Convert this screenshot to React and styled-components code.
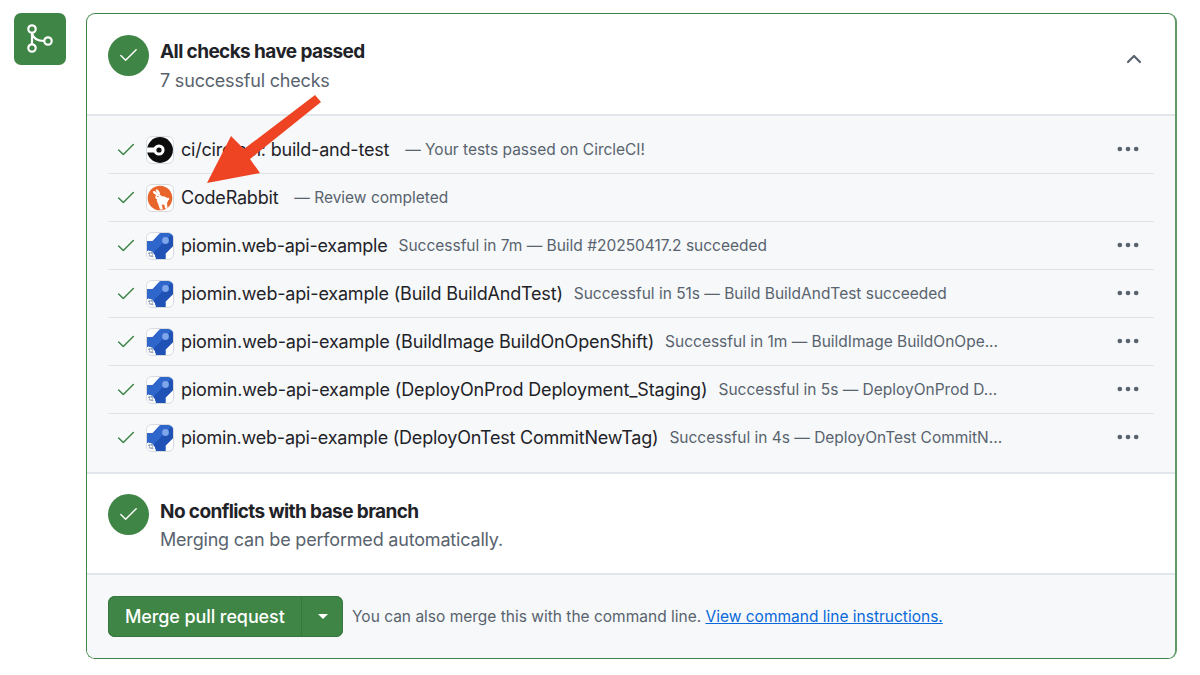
import React from 'react';
import styled, { createGlobalStyle } from 'styled-components';
import { Check, ChevronUp, Ellipsis } from 'lucide-react';

const GlobalStyle = createGlobalStyle`
  html, body { margin: 0; padding: 0; background: #fff; }
  body { font-family: Inter, "Liberation Sans", sans-serif; color: #1f2328; }
`;

const Page = styled.div`
  position: relative;
  width: 1200px;
  height: 675px;
  overflow: hidden;
  box-sizing: border-box;
  padding: 13px 23px 0 14px;
  display: flex;
  gap: 20px;
  align-items: flex-start;
`;

const MergeBadge = styled.div`
  width: 52px;
  height: 52px;
  border-radius: 7px;
  background: #3e8546;
  display: flex;
  flex-shrink: 0;
`;

const Card = styled.div`
  flex: 1;
  height: 646px;
  box-sizing: border-box;
  border: 1px solid #3f8547;
  border-right: 2px solid #5f9a66;
  border-radius: 9px;
  overflow: hidden;
  display: flex;
  flex-direction: column;
`;

const Section = styled.div`
  height: ${p => p.$height}px;
  flex-shrink: 0;
  box-sizing: border-box;
  display: flex;
  align-items: flex-start;
  gap: 11px;
  padding: ${p => p.$top}px 21px 0;
`;

const StatusCircle = styled.div`
  width: 41px;
  height: 41px;
  border-radius: 50%;
  background: #3e8546;
  color: #fff;
  display: flex;
  align-items: center;
  justify-content: center;
  flex-shrink: 0;
`;

const SectionText = styled.div`
  flex: 1;
  display: flex;
  flex-direction: column;
  gap: ${p => p.$gap}px;
  margin-top: ${p => p.$offset}px;
`;

const SectionTitle = styled.div`
  font-size: 19px;
  line-height: 23px;
  font-weight: 700;
  letter-spacing: -0.6px;
  color: #1f2328;
`;

const SectionSub = styled.div`
  font-size: 18px;
  line-height: 23px;
  letter-spacing: -0.19px;
  color: #59636e;
`;

const Collapse = styled.div`
  color: #59636e;
  display: flex;
  margin: 12px 8px 0 0;
`;

const Checks = styled.div`
  height: 360px;
  flex-shrink: 0;
  box-sizing: border-box;
  background: #f6f8fa;
  border-top: 2px solid #e2e5e9;
  border-bottom: 2px solid #e2e5e9;
  padding: 10px 21px 0;
`;

const Row = styled.div`
  height: 48px;
  box-sizing: border-box;
  display: flex;
  align-items: center;
  border-bottom: 1px solid ${p => (p.$last ? 'transparent' : '#e0e3e7')};
`;

const RowCheck = styled.div`
  width: 38px;
  color: #3e8546;
  display: flex;
  padding-left: 7px;
  box-sizing: border-box;
  flex-shrink: 0;
`;

const AppIcon = styled.div`
  width: 28px;
  height: 28px;
  box-sizing: border-box;
  border: 1px solid #d8dce0;
  border-radius: 6px;
  background: #fff;
  overflow: hidden;
  flex-shrink: 0;
  display: flex;
  align-items: center;
  justify-content: center;
  margin-right: 7px;
`;

const RowName = styled.span`
  font-size: 18px;
  letter-spacing: ${p => p.$track}px;
  color: #1f2328;
  white-space: nowrap;
`;

const RowDetail = styled.span`
  flex: 1;
  margin-left: ${p => p.$gap}px;
  font-size: 15.5px;
  letter-spacing: -0.01px;
  color: #59636e;
  white-space: nowrap;
`;

const RowMenu = styled.div`
  width: 28px;
  height: 20px;
  margin: 0 12px 2px 0;
  color: #59636e;
  display: flex;
  align-items: center;
  justify-content: center;
`;

const Footer = styled.div`
  flex: 1;
  background: #f6f8fa;
  border-top: 2px solid #e2e5e9;
  display: flex;
  align-items: center;
  gap: 9px;
  padding: 0 21px 0;
`;

const MergeButton = styled.div`
  display: flex;
  height: 41px;
  background: #3e8546;
  color: #fff;
  border-radius: 7px;
  box-shadow: inset 0 0 0 1px #37763e;
  font-size: 18px;
  font-weight: 500;
  letter-spacing: -0.1px;
  align-items: stretch;
`;

const MergeLabel = styled.div`
  width: 194px;
  box-sizing: border-box;
  padding-left: 17px;
  display: flex;
  align-items: center;
  border-right: 1px solid #37763e;
`;

const MergeCaret = styled.div`
  width: 41px;
  display: flex;
  align-items: center;
  justify-content: center;
  &::after {
    content: '';
    border-left: 5px solid transparent;
    border-right: 5px solid transparent;
    border-top: 5px solid #fff;
  }
`;

const Hint = styled.div`
  font-size: 15.5px;
  letter-spacing: 0;
  color: #59636e;
  white-space: nowrap;
`;

const HintLink = styled.a`
  color: #0969da;
  text-decoration: underline;
`;

const Arrow = styled.svg`
  position: absolute;
  left: 0;
  top: 0;
  pointer-events: none;
`;

const BranchIcon = () => (
  <svg width="52" height="52" viewBox="0 0 52 52" fill="none" stroke="#fff" strokeWidth="2.2">
    <circle cx="18" cy="16" r="3.7" />
    <circle cx="18" cy="35" r="3.7" />
    <circle cx="34" cy="28" r="3.7" />
    <path d="M18 19.700v11.600M18 20c1 5 5 8 12.300 8" />
  </svg>
);

const CircleCiIcon = () => (
  <svg width="26" height="26" viewBox="0 0 26 26">
    <circle cx="13" cy="13" r="12.900" fill="#0d0d0d" />
    <rect x="0" y="10.500" width="12" height="5" fill="#fff" />
    <circle cx="12" cy="13" r="5.600" fill="#fff" />
    <circle cx="12" cy="13" r="2.600" fill="#0d0d0d" />
  </svg>
);

const RabbitIcon = () => (
  <svg width="26" height="26" viewBox="0 0 26 26">
    <circle cx="13" cy="13" r="12.300" fill="#e8652c" />
    <g fill="#fff">
      <ellipse cx="9" cy="8.500" rx="1.300" ry="3.600" transform="rotate(-55 9 8.500)" />
      <ellipse cx="11" cy="7" rx="1.200" ry="3.200" transform="rotate(-35 11 7)" />
      <ellipse cx="11.500" cy="12" rx="3.200" ry="2.500" />
      <ellipse cx="15.500" cy="15.500" rx="5.600" ry="4.200" />
      <path d="M10.500 17h3.500l2 7.500h-3zM17 18h3l.5 5.500h-2.500z" />
      <circle cx="21" cy="14" r="1.200" />
    </g>
    <circle cx="11" cy="11.500" r=".7" fill="#e8652c" />
  </svg>
);

const PipelinesIcon = () => (
  <svg width="26" height="26" viewBox="0 0 26 26">
    <path d="M0 8h5.500L13 0h13v13l-7.500 7.500V26H9l-1-4-4-4H0z" fill="#2f66cc" />
    <path d="M7 19 19 7l7-7v13l-7.500 7.500V26H9z" fill="#1f52b4" />
    <circle cx="18.500" cy="7.500" r="3.400" fill="#7fa6e8" />
    <path d="M1 17l8 8H1z" fill="#fff" />
    <path d="M1.500 19.500l4.500 4.500M5.500 18.500l-3 5" stroke="#9fb0c4" strokeWidth="2" />
    <circle cx="4" cy="21.500" r="1.600" fill="#fff" stroke="#8fa0b5" strokeWidth=".8" />
  </svg>
);

const checks = [
  { name: 'ci/circleci: build-and-test', detail: '— Your tests passed on CircleCI!', gap: 16, track: -0.2, icon: <CircleCiIcon /> },
  { name: 'CodeRabbit', detail: '— Review completed', gap: 16, track: -0.2, icon: <RabbitIcon />, noMenu: true },
  { name: 'piomin.web-api-example', detail: 'Successful in 7m — Build #20250417.2 succeeded', gap: 11, track: -0.24, icon: <PipelinesIcon /> },
  { name: 'piomin.web-api-example (Build BuildAndTest)', detail: 'Successful in 51s — Build BuildAndTest succeeded', gap: 11, track: -0.18, icon: <PipelinesIcon /> },
  { name: 'piomin.web-api-example (BuildImage BuildOnOpenShift)', detail: 'Successful in 1m — BuildImage BuildOnOpe...', gap: 11, track: -0.14, icon: <PipelinesIcon /> },
  { name: 'piomin.web-api-example (DeployOnProd Deployment_Staging)', detail: 'Successful in 5s — DeployOnProd D...', gap: 11, track: -0.13, icon: <PipelinesIcon /> },
  { name: 'piomin.web-api-example (DeployOnTest CommitNewTag)', detail: 'Successful in 4s — DeployOnTest CommitN...', gap: 11, track: -0.22, icon: <PipelinesIcon /> },
];

export default function App() {
  return (
    <Page>
      <GlobalStyle />
      <MergeBadge>
        <BranchIcon />
      </MergeBadge>
      <Card>
        <Section $height={100} $top={21}>
          <StatusCircle>
            <Check size={23} strokeWidth={1.5} />
          </StatusCircle>
          <SectionText $gap={6} $offset={5}>
            <SectionTitle>All checks have passed</SectionTitle>
            <SectionSub>7 successful checks</SectionSub>
          </SectionText>
          <Collapse>
            <ChevronUp size={24} strokeWidth={2.2} />
          </Collapse>
        </Section>
        <Checks>
          {checks.map((check, index) => (
            <Row key={index} $last={index === checks.length - 1}>
              <RowCheck>
                <Check size={22} strokeWidth={1.6} />
              </RowCheck>
              <AppIcon>{check.icon}</AppIcon>
              <RowName $track={check.track}>{check.name}</RowName>
              <RowDetail $gap={check.gap}>{check.detail}</RowDetail>
              {!check.noMenu && (
                <RowMenu>
                  <Ellipsis size={28} strokeWidth={2} />
                </RowMenu>
              )}
            </Row>
          ))}
        </Checks>
        <Section $height={99} $top={20}>
          <StatusCircle>
            <Check size={23} strokeWidth={1.5} />
          </StatusCircle>
          <SectionText $gap={5} $offset={6}>
            <SectionTitle>No conflicts with base branch</SectionTitle>
            <SectionSub>Merging can be performed automatically.</SectionSub>
          </SectionText>
        </Section>
        <Footer>
          <MergeButton>
            <MergeLabel>Merge pull request</MergeLabel>
            <MergeCaret />
          </MergeButton>
          <Hint>
            You can also merge this with the command line. <HintLink href="#">View command line instructions.</HintLink>
          </Hint>
        </Footer>
      </Card>
      <Arrow width="1200" height="675" viewBox="0 0 1200 675">
        <path d="M315 95 L321 102 L250 159 L260 173 L207 183 L231 136 L244 149 Z" fill="#ee4423" />
      </Arrow>
    </Page>
  );
}
